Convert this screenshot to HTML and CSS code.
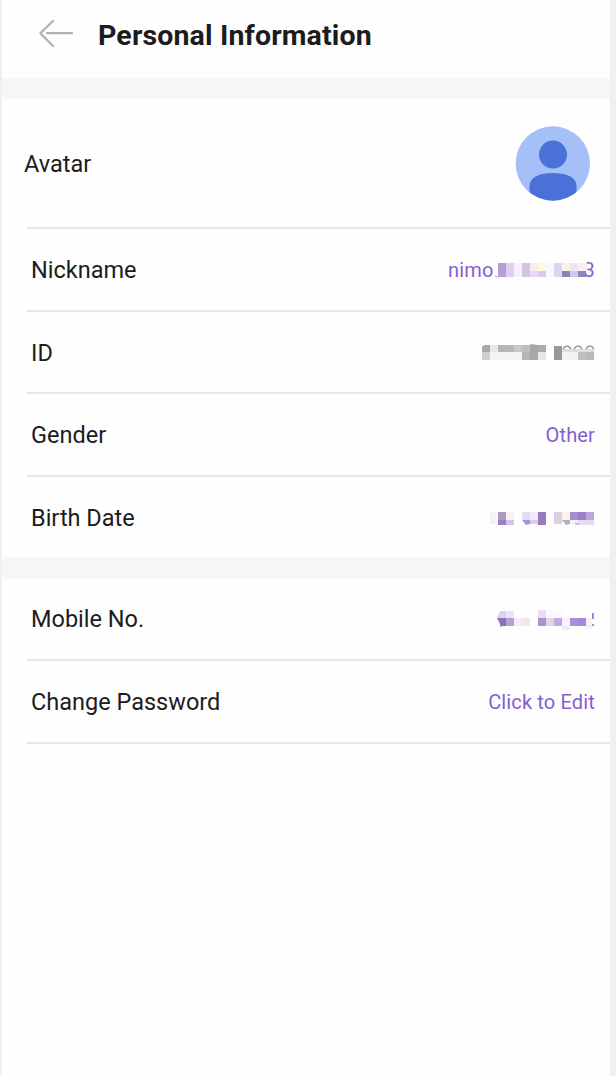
FILE: index.html
```html
<!DOCTYPE html>
<html lang="en">
<head>
<meta charset="utf-8">
<title>Personal Information</title>
<link rel="stylesheet" href="styles.css">
</head>
<body>
<main class="screen">
  <header class="header">
    <svg class="back" width="36" height="30" viewBox="0 0 36 30" fill="none" stroke="#b3b3b3" stroke-width="2.3" stroke-linecap="round" stroke-linejoin="round"><path d="M15 2 2.4 14.2 15 27M9 14.2H34"/></svg>
    <h1 class="title">Personal Information</h1>
  </header>
  <section class="group">
    <div class="row row-avatar">
      <span class="label">Avatar</span>
      <svg class="avatar" width="75" height="75" viewBox="0 0 75 75">
        <defs><clipPath id="disc"><circle cx="37.8" cy="37.5" r="37.2"/></clipPath></defs>
        <g clip-path="url(#disc)">
          <rect width="75" height="75" fill="#a5bff8"/>
          <circle cx="38" cy="28.6" r="14" fill="#4a71d8"/>
          <path d="M14.5 76V60C14.5 51 24.5 47 38 47S61.500 51 61.500 60V76Z" fill="#4a71d8"/>
        </g>
      </svg>
    </div>
    <div class="row">
      <span class="label">Nickname</span>
      <span class="value masked">nimo<span class="tail">3</span>
        <svg class="mosaic" width="112" height="24" viewBox="0 0 112 24">
          <path d="M12 18Q14 20 17 18" fill="none" stroke="#a58bd5"/>
          <path fill="#b5a0d5" d="M15 5h8v14h-8z"/><path fill="#dcd0f3" d="M23 5h8v14h-8z"/>
          <path fill="#f7efff" d="M31 5h8v14h-8z"/><path fill="#d0c7dd" d="M39 5h8v14h-8z"/>
          <path fill="#f7edf8" d="M47 5h8v8h-8z"/><path fill="#e5daf6" d="M47 13h8v6h-8z"/>
          <path fill="#fffbda" d="M55 5h8v8h-8z"/><path fill="#d8caf2" d="M55 13h8v6h-8z"/>
          <path fill="#fbf7ff" d="M63 5h8v14h-8z"/><path fill="#dcd5ef" d="M71 5h8v14h-8z"/>
          <path fill="#f8f2e9" d="M79 5h8v8h-8z"/><path fill="#8f7fba" d="M79 13h8v6h-8z"/>
          <path fill="#eae5ef" d="M87 5h8v8h-8z"/><path fill="#d2c8e7" d="M87 13h8v6h-8z"/>
          <path fill="#faeff5" d="M95 5h9v8h-9z"/><path fill="#9282c0" d="M95 13h8v6h-8z"/>
        </svg>
      </span>
    </div>
    <div class="row">
      <span class="label">ID</span>
      <svg class="mosaic-block" width="114" height="24" viewBox="0 0 114 24">
        <path fill="#a9a9a9" d="M3 4h6v7H1V6z"/><path fill="#e9e9e9" d="M9 4h8v7H9z"/>
        <path fill="#b6b6b6" d="M17 4h16v7H17z"/><path fill="#c8c8c8" d="M33 4h8v7h-8z"/>
        <path fill="#bdbdbd" d="M41 4h8v7h-8z"/><path fill="#a6a6a6" d="M49 3l8 1v7h-8z"/><path fill="#aaa" d="M57 4h8v7h-8z"/>
        <path fill="#cfcfcf" d="M1 11h8v8H1z"/><path fill="#f3f3f3" d="M9 11h32v8H9z"/>
        <path fill="#b4b4b4" d="M41 11h8v8h-8z"/><path fill="#a8a8a8" d="M49 11h8v8h-8z"/><path fill="#e7e7e7" d="M57 11h8v8h-8z"/>
        <path fill="#999" d="M73 5h8v14h-8z"/><path fill="#f2f2f2" d="M81 11h16v8H81z"/>
        <path fill="#dedede" d="M81 8h32v3H81z"/><path fill="#bfbfbf" d="M97 11h8v8h-8z"/><path fill="#b9b9b9" d="M105 11h8v8h-8z"/>
        <path d="M82 8Q86 2 90 8M93 8Q97 2 101 8M105 8Q109 2 113 8" fill="none" stroke="#999" stroke-width="1.5"/>
      </svg>
    </div>
    <div class="row">
      <span class="label">Gender</span>
      <span class="value">Other</span>
    </div>
    <div class="row row-last">
      <span class="label">Birth Date</span>
      <svg class="mosaic-block mosaic-date" width="106" height="24" viewBox="0 0 106 24">
        <path fill="#f5f1fa" d="M2 6h7v12H2z"/><path fill="#ad99bf" d="M10 6h8v8h-8z"/><path fill="#9780bd" d="M10 14h8v5h-8z"/>
        <path fill="#f7f3f5" d="M18 6h8v8h-8z"/><path fill="#d2c2e4" d="M18 14h8v5h-8z"/>
        <path fill="#e0dff0" d="M34 6h8v8h-8z"/><path fill="#a98fda" d="M34 14h8v4l-4 1z"/>
        <path fill="#f3e8fc" d="M42 6h8v8h-8z"/><path fill="#d8cee0" d="M42 14h8v4h-8z"/><path fill="#967cbd" d="M50 6h8v13h-8z"/>
        <path fill="#d8d1e4" d="M66 6h8v12h-8z"/><path fill="#fcf3e8" d="M74 6h8v8h-8z"/><path fill="#b9acc5" d="M74 14h8v4l-4 1z"/>
        <path fill="#a78cce" d="M82 6h8v8h-8z"/><path fill="#9d80cc" d="M90 6h8v8h-8z"/><path fill="#bba6dc" d="M98 6h8v8h-8z"/>
        <path fill="#f5edfb" d="M82 14h8v4h-8z"/><path fill="#e5daf2" d="M90 14h16v5H90z"/><path d="M87 18h4" stroke="#9b82c8"/>
      </svg>
    </div>
  </section>
  <section class="group group-account">
    <div class="row">
      <span class="label">Mobile No.</span>
      <svg class="mosaic-block mosaic-phone" width="106" height="24" viewBox="0 0 106 24">
        <path fill="#ded0f2" d="M12 4h6v7H9z"/><path fill="#ede4f8" d="M18 4h8v7h-8z"/>
        <path fill="#8e70bd" d="M9 11h9v8h-5z"/><path fill="#b3a3d2" d="M18 11h8v8h-8z"/><path fill="#f7eaf6" d="M26 11h8v8h-8z"/><path fill="#f3e7ec" d="M34 11h8v8h-8z"/>
        <path fill="#e8ddf5" d="M50 3h8v8h-8z"/><path fill="#aa91cf" d="M50 11h8v8h-8z"/><path fill="#ddd7e4" d="M58 11h8v8h-8z"/><path fill="#bfa9df" d="M66 11h8v8h-8z"/>
        <path fill="#f9f3fc" d="M74 11h8v8h-8z"/><path fill="#a88fda" d="M82 11h8v8h-8z"/><path fill="#a288d5" d="M90 11h8v8h-8z"/>
        <path fill="#f6effc" d="M98 11h6v11h-6z"/><path fill="#fbf8ff" d="M58 3h16v8H58z"/><path fill="#f0e9fb" d="M74 19h8v4h-8z"/><path d="M105 6v6M105 17v2" stroke="#8f6bd2" stroke-width="1.6"/><path d="M12 19h2" stroke="#755d91"/>
      </svg>
    </div>
    <div class="row">
      <span class="label">Change Password</span>
      <span class="value">Click to Edit</span>
    </div>
  </section>
</main>
</body>
</html>
```
FILE: styles.css
```css
* { box-sizing: border-box; }
body { margin: 0; background: #fff; font-family: Roboto, "Liberation Sans", sans-serif; color: #1c1c1c; }
.screen { min-height: 1076px; border-left: 2px solid #efefef; border-right: 6px solid #f0f0f0; background: #fefefe; }
.header { display: flex; height: 78px; padding: 19px 0 0 36px; gap: 24px; }
.title { margin: 0; font-size: 28.5px; letter-spacing: 0.15px; line-height: 34px; font-weight: 700; white-space: nowrap; }
.back { flex: none; }
.group { border-top: 21px solid #f6f6f6; }
.group-account { border-top-width: 22px; }
.row { display: flex; align-items: center; justify-content: space-between; height: 82.5px; margin-left: 25px; padding: 2px 15px 0 4px; border-bottom: 2px solid #e6e6e6; }
.row-avatar { height: 130px; margin-left: 22px; padding: 0 20px 2px 0; border-bottom: 0; background: linear-gradient(#e6e6e6, #e6e6e6) 3px 100% / 100% 2px no-repeat; }
.row-avatar .label { padding-top: 2px; }
.row-last { height: 80px; border-bottom: 0; }
.group-account .row { padding-top: 1px; }
.label { font-size: 23.5px; letter-spacing: 0; line-height: 30px; }
.value { font-size: 20px; line-height: 24px; letter-spacing: 0.15px; color: #8360cf; }
.masked { position: relative; width: 147px; display: flex; justify-content: space-between; }
.mosaic { position: absolute; left: 35px; top: 0; }
.mosaic-block { display: block; }
.mosaic-date, .mosaic-phone { margin-right: 1px; }
```
